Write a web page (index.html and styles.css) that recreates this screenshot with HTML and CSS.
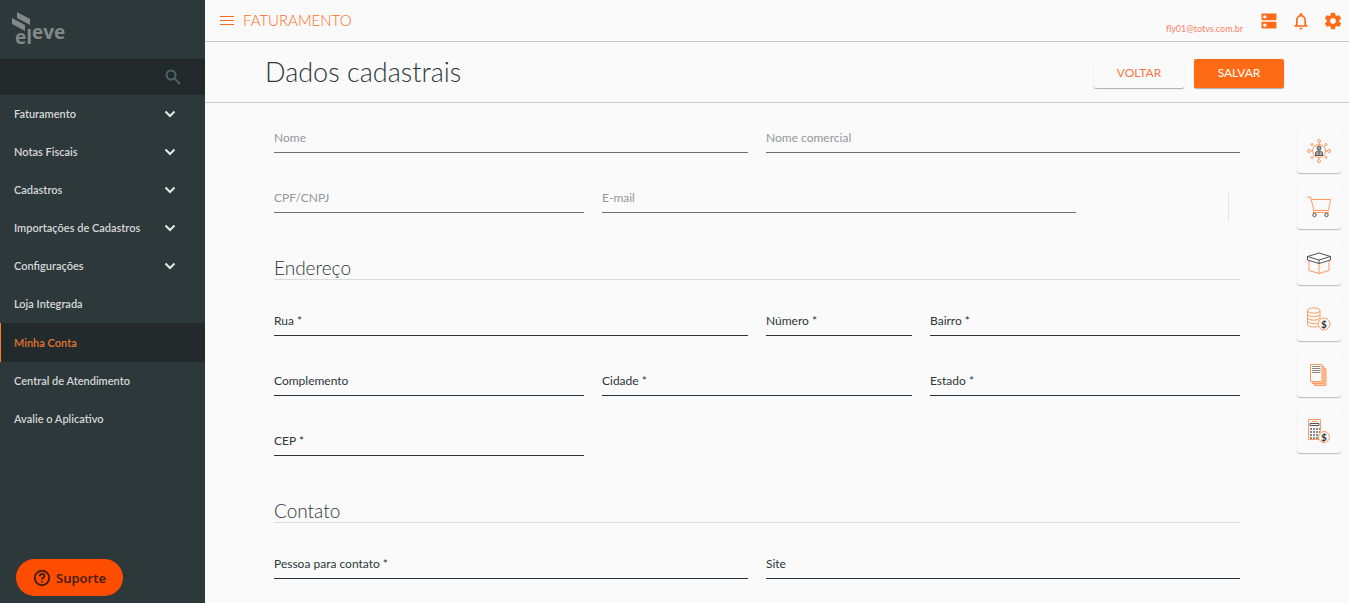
FILE: index.html
```html
<!DOCTYPE html>
<html lang="pt-BR">
<head>
    <meta charset="UTF-8">
    <meta name="viewport" content="width=device-width, initial-scale=1.0">
    <title>Dados cadastrais</title>
    <link rel="stylesheet" href="styles.css">
</head>
<body>
    <aside class="sidebar">
        <a href="#" class="logo" aria-label="eleve">
            <svg width="56" height="40" viewBox="0 0 56 40">
                <path d="M5 0 L18 7 V13 L5 6 Z M0 6 L13 13 V19 L0 12 Z"/>
                <text x="3" y="32" class="logo-text">el</text>
                <text x="20" y="27" class="logo-text">eve</text>
            </svg>
        </a>
        <form class="search">
            <input type="search" aria-label="Pesquisar">
            <button type="button" aria-label="Buscar">
                <svg width="16" height="16" viewBox="0 0 16 16"><circle cx="6" cy="6" r="4.5"/><path d="M9.3 9.3 L15 15"/></svg>
            </button>
        </form>
        <nav class="menu">
            <button type="button" class="menu-item">Faturamento <svg width="12" height="8" viewBox="0 0 12 8"><path d="M1.5 1.5 L6 6 L10.5 1.5"/></svg></button>
            <button type="button" class="menu-item">Notas Fiscais <svg width="12" height="8" viewBox="0 0 12 8"><path d="M1.5 1.5 L6 6 L10.5 1.5"/></svg></button>
            <button type="button" class="menu-item">Cadastros <svg width="12" height="8" viewBox="0 0 12 8"><path d="M1.5 1.5 L6 6 L10.5 1.5"/></svg></button>
            <button type="button" class="menu-item">Importações de Cadastros <svg width="12" height="8" viewBox="0 0 12 8"><path d="M1.5 1.5 L6 6 L10.5 1.5"/></svg></button>
            <button type="button" class="menu-item">Configurações <svg width="12" height="8" viewBox="0 0 12 8"><path d="M1.5 1.5 L6 6 L10.5 1.5"/></svg></button>
            <a href="#" class="menu-item">Loja Integrada</a>
            <a href="#" class="menu-item active">Minha Conta</a>
            <a href="#" class="menu-item">Central de Atendimento</a>
            <a href="#" class="menu-item">Avalie o Aplicativo</a>
        </nav>
    </aside>

    <main class="main">
        <header class="topbar">
            <button type="button" class="icon-btn" aria-label="Menu">
                <svg width="16" height="10" viewBox="0 0 16 10"><path d="M1 0h14v1H1z M1 4h14v1H1z M1 8h14v1H1z"/></svg>
            </button>
            <span class="module">FATURAMENTO</span>
            <a href="#" class="user">fly01@totvs.com.br</a>
            <div class="top-icons">
                <button type="button" class="icon-btn" aria-label="Aplicativos">
                    <svg width="20" height="20" viewBox="0 0 24 24"><path d="M20 13H4c-.55 0-1 .45-1 1v6c0 .55.45 1 1 1h16c.55 0 1-.45 1-1v-6c0-.55-.45-1-1-1zM7 19c-1.1 0-2-.9-2-2s.9-2 2-2 2 .9 2 2-.9 2-2 2zM20 3H4c-.55 0-1 .45-1 1v6c0 .55.45 1 1 1h16c.55 0 1-.45 1-1V4c0-.55-.45-1-1-1zM7 9c-1.1 0-2-.9-2-2s.9-2 2-2 2 .9 2 2-.9 2-2 2z"/></svg>
                </button>
                <button type="button" class="icon-btn" aria-label="Notificações">
                    <svg width="20" height="20" viewBox="0 0 24 24"><path d="M12 22c1.1 0 2-.9 2-2h-4c0 1.1.89 2 2 2zm6-6v-5c0-3.07-1.64-5.64-4.5-6.32V4c0-.83-.67-1.5-1.5-1.5s-1.5.67-1.5 1.5v.68C7.63 5.36 6 7.92 6 11v5l-2 2v1h16v-1l-2-2zm-2 1H8v-6c0-2.48 1.51-4.5 4-4.5s4 2.02 4 4.5v6z"/></svg>
                </button>
                <button type="button" class="icon-btn" aria-label="Configurações">
                    <svg width="20" height="20" viewBox="0 0 24 24"><path d="M19.43 12.98c.04-.32.07-.64.07-.98s-.03-.66-.07-.98l2.11-1.65c.19-.15.24-.42.12-.64l-2-3.46c-.12-.22-.39-.3-.61-.22l-2.49 1c-.52-.4-1.08-.73-1.69-.98l-.38-2.65C14.46 2.18 14.25 2 14 2h-4c-.25 0-.46.18-.49.42l-.38 2.65c-.61.25-1.17.59-1.69.98l-2.49-1c-.23-.09-.49 0-.61.22l-2 3.46c-.13.22-.07.49.12.64l2.11 1.65c-.04.32-.07.65-.07.98s.03.66.07.98l-2.11 1.65c-.19.15-.24.42-.12.64l2 3.46c.12.22.39.3.61.22l2.49-1c.52.4 1.08.73 1.69.98l.38 2.65c.03.24.24.42.49.42h4c.25 0 .46-.18.49-.42l.38-2.65c.61-.25 1.17-.59 1.69-.98l2.49 1c.23.09.49 0 .61-.22l2-3.46c.12-.22.07-.49-.12-.64l-2.11-1.65zM12 15.5c-1.93 0-3.5-1.57-3.5-3.5s1.57-3.5 3.5-3.5 3.5 1.57 3.5 3.5-1.57 3.5-3.5 3.5z"/></svg>
                </button>
            </div>
        </header>

        <div class="page-header">
            <h1>Dados cadastrais</h1>
            <button type="button" class="btn btn-voltar">VOLTAR</button>
            <button type="submit" form="cadastro" class="btn btn-salvar">SALVAR</button>
        </div>

        <div class="content">
            <form id="cadastro" class="form">
                <div class="row">
                    <div class="field col-6"><label for="nome">Nome</label><input type="text" id="nome" disabled></div>
                    <div class="field col-6"><label for="nomecomercial">Nome comercial</label><input type="text" id="nomecomercial" disabled></div>
                    <div class="field col-4"><label for="cpfcnpj">CPF/CNPJ</label><input type="text" id="cpfcnpj" disabled></div>
                    <div class="field col-6"><label for="email">E-mail</label><input type="email" id="email" disabled></div>
                    <div class="divider col-2"></div>
                </div>

                <h2>Endereço</h2>
                <div class="row">
                    <div class="field col-6"><label for="rua">Rua *</label><input type="text" id="rua"></div>
                    <div class="field col-2"><label for="numero">Número *</label><input type="text" id="numero"></div>
                    <div class="field col-4"><label for="bairro">Bairro *</label><input type="text" id="bairro"></div>
                    <div class="field col-4"><label for="complemento">Complemento</label><input type="text" id="complemento"></div>
                    <div class="field col-4"><label for="cidade">Cidade *</label><input type="text" id="cidade"></div>
                    <div class="field col-4"><label for="estado">Estado *</label><input type="text" id="estado"></div>
                    <div class="field col-4"><label for="cep">CEP *</label><input type="text" id="cep"></div>
                </div>

                <h2>Contato</h2>
                <div class="row">
                    <div class="field col-6"><label for="contato">Pessoa para contato *</label><input type="text" id="contato"></div>
                    <div class="field col-6"><label for="site">Site</label><input type="text" id="site"></div>
                </div>
            </form>

            <div class="shortcuts">
                <button type="button" aria-label="Clientes">
                    <svg width="24" height="24" viewBox="0 0 24 24">
                        <g class="o"><circle cx="12" cy="12" r="6.5"/><circle cx="12" cy="2" r="1.5"/><circle cx="12" cy="22" r="1.5"/><circle cx="2" cy="12" r="1.5"/><circle cx="22" cy="12" r="1.5"/><circle cx="5" cy="5.5" r="1"/><circle cx="19" cy="5.5" r="1"/><circle cx="5" cy="18.5" r="1"/><circle cx="19" cy="18.5" r="1"/><path d="M12 3.5v2M12 18.5v2M3.5 12h2M18.5 12h2M6 6.5l1.5 1.5M18 6.5l-1.5 1.5M6 17.5l1.5-1.5M18 17.5l-1.5-1.5"/></g>
                        <g class="d body"><circle cx="12" cy="9" r="2"/><path d="M8.5 16.5v-3l2-1.5h3l2 1.5v3z M12 12.5v3"/></g>
                    </svg>
                </button>
                <button type="button" aria-label="Vendas">
                    <svg width="24" height="24" viewBox="0 0 24 24">
                        <path class="o" d="M0 2h3.5L7 15.5h14.5M4.5 4.5h19l-2 11M7 15.5l-1 2h16"/>
                        <g class="d"><circle cx="7.5" cy="20" r="1.7"/><circle cx="19.5" cy="20" r="1.7"/></g>
                    </svg>
                </button>
                <button type="button" aria-label="Produtos">
                    <svg width="24" height="24" viewBox="0 0 24 24">
                        <path class="o" d="M2 9.5v10l10 3 10-3v-10M12 12v10.5"/>
                        <path class="d" d="M.5 5.5L12 2l11.5 3.5V9L12 12.5.5 9zM.5 5.5L12 9l11.5-3.5M12 9v3.5"/>
                    </svg>
                </button>
                <button type="button" aria-label="Financeiro">
                    <svg width="24" height="24" viewBox="0 0 24 24">
                        <path class="o" d="M.5 3.5C.5 0 13 0 13 3.5S.5 7 .5 3.5V17c0 3 6 3.5 10 2.5M13 3.5v8M.5 7c0 3.5 12.5 3.5 12.5 0M.5 10.5c0 3.5 12.5 3.5 12.5 0M.5 13.8c0 3 7 3.2 10 2.2"/>
                        <circle class="o sheet" cx="17" cy="17" r="6"/><text x="17" y="21">$</text>
                    </svg>
                </button>
                <button type="button" aria-label="Notas">
                    <svg width="24" height="24" viewBox="0 0 24 24">
                        <path class="o pale" d="M7.5 5.5H19v17H7.5z"/><path class="o pale" d="M5.5 3.5H17v17H5.5z"/><path class="o sheet" d="M3.5 1.5H15v17H3.5z"/>
                        <path class="d lines" d="M5 3.5h8.5M5 5.5h8.5M5 7.5h8.5M5 9.5h8.5"/>
                    </svg>
                </button>
                <button type="button" aria-label="Calculadora">
                    <svg width="24" height="24" viewBox="0 0 24 24">
                        <path class="o" d="M13 20.5H1.5V.5h12v12M5 2.5h5"/>
                        <path class="d" d="M3 4.5h9v2H3z"/><path class="keys" d="M3 10h10M3 13h10M3 16h9M3 19h9"/>
                        <circle class="o sheet" cx="17" cy="18" r="5.5"/><text x="17" y="22">$</text>
                    </svg>
                </button>
            </div>
        </div>
    </main>

    <button type="button" class="suporte">
        <svg width="18" height="18" viewBox="0 0 18 18"><circle cx="9" cy="9" r="7.2"/><path d="M6.8 7.2c0-2.8 4.5-2.8 4.5 0 0 1.6-2.3 1.6-2.3 3.3M9 12v1.6"/></svg>
        Suporte
    </button>
</body>
</html>
```
FILE: styles.css
```css
* {
    box-sizing: border-box;
}
body {
    font-family: Lato, sans-serif;
    font-size: 12px;
    color: #2c3739;
    background-color: #fafafa;
    margin: 0;
    display: flex;
    min-height: 100vh;
}
button, input {
    font-family: inherit;
    font-size: inherit;
    border: none;
    background: none;
    padding: 0;
}
button {
    cursor: pointer;
}
a {
    text-decoration: none;
}
svg {
    display: block;
}

/* Menu lateral */
.sidebar {
    width: 205px;
    flex-shrink: 0;
    background-color: #2d383a;
}
.logo {
    display: block;
    height: 59px;
    padding: 12px;
}
.logo svg {
    fill: #838889;
    overflow: visible;
}
.logo-text {
    font-family: "Open Sans", sans-serif;
    font-weight: bold;
    font-size: 19px;
}
.search {
    display: flex;
    align-items: center;
    height: 36px;
    padding: 0 24px 0 14px;
    background-color: #22292b;
}
.search input {
    flex: 1;
    min-width: 0;
    color: #d5d7d8;
    outline: none;
}
.search svg {
    fill: none;
    stroke: #4d6567;
    stroke-width: 2;
}
.menu-item {
    display: flex;
    align-items: center;
    justify-content: space-between;
    width: 100%;
    height: 38px;
    padding: 0 29px 1px 14px;
    font-size: 11px;
    font-weight: 600;
    color: #d5d7d8;
}
.menu-item svg {
    fill: none;
    stroke: #e6e8e8;
    stroke-width: 2;
}
.menu-item.active {
    height: 39px;
    padding-left: 13px;
    border-left: 1px solid #ff7a30;
    background-color: #232a2c;
    color: #e2742f;
}

/* Barra superior */
.main {
    flex: 1;
    min-width: 0;
}
.topbar {
    display: flex;
    align-items: center;
    height: 42px;
    padding: 0 6px 0 14px;
    border-bottom: 1px solid #c6c6c6;
    color: #ff6b16;
}
.icon-btn svg {
    fill: #ff6b16;
}
.module {
    margin-left: 8px;
    padding-bottom: 2px;
    font-size: 15px;
    font-weight: 300;
}
.user {
    margin-left: auto;
    padding-top: 16px;
    font-size: 9px;
    color: #ff7f66;
}
.top-icons {
    display: flex;
    gap: 12px;
    margin-left: 16px;
}

.page-header {
    display: flex;
    align-items: center;
    gap: 10px;
    height: 61px;
    padding: 2px 65px 0 60px;
    border-bottom: 1px solid #c9c9c9;
}
h1 {
    margin: 0 auto 0 0;
    padding-bottom: 4px;
    font-size: 27px;
    font-weight: 300;
}
.btn {
    width: 90px;
    height: 29px;
    padding-bottom: 2px;
    border-radius: 2px;
    box-shadow: 0 1px 1px rgba(0, 0, 0, 0.3);
}
.btn-voltar {
    color: #ff7346;
}
.btn-salvar {
    background-color: #ff6b14;
    color: white;
}

/* Formulario */
.content {
    display: flex;
    justify-content: space-between;
    padding: 22px 8px 0 69px;
}
.form {
    flex: 1;
    margin-right: 57px;
}
.row {
    display: grid;
    grid-template-columns: repeat(12, 1fr);
    gap: 32px 18px;
}
.col-2 { grid-column: span 2; }
.col-4 { grid-column: span 4; }
.col-6 { grid-column: span 6; }
.field {
    display: grid;
}
.field label, .field input {
    grid-area: 1 / 1;
    min-width: 0;
}
.field label {
    padding-top: 5px;
    line-height: 16px;
}
.field input {
    height: 28px;
    border-bottom: 1px solid #2c3235;
    border-radius: 0;
    outline: none;
}
.field:has(input:disabled) label {
    color: #92979a;
}
.field input:disabled {
    border-bottom-color: #6c7072;
}
.divider {
    height: 28px;
    margin: 8px 11px -8px 0;
    border-right: 1px solid #e3e3e3;
}
h2 {
    margin: 40px 0 28px;
    height: 27px;
    border-bottom: 1px solid #dadada;
    font-size: 19px;
    font-weight: 300;
    line-height: 30px;
}

.shortcuts {
    display: flex;
    flex-direction: column;
    gap: 12px;
    padding-top: 4px;
}
.shortcuts button {
    display: flex;
    align-items: center;
    justify-content: center;
    width: 44px;
    height: 44px;
    border-radius: 3px;
    box-shadow: 0 1px 1px rgba(0, 0, 0, 0.25);
}
.shortcuts svg {
    fill: none;
}
.o { stroke: #ff9a60; }
.d { stroke: #555; }
.body { fill: #aaa; }
.pale { fill: #fdcdb0; }
.sheet { fill: #fafafa; }
.lines { stroke: #888; }
.keys {
    stroke: #888;
    stroke-width: 2;
    stroke-dasharray: 2 1;
}
.shortcuts text {
    font-size: 10px;
    font-weight: bold;
    text-anchor: middle;
    fill: #333;
}

.suporte {
    position: fixed;
    left: 16px;
    bottom: 7px;
    display: flex;
    align-items: center;
    gap: 5px;
    height: 37px;
    padding: 0 17px;
    border-radius: 19px;
    background-color: #ff4d00;
    color: #4a1e0c;
    font-family: "Noto Sans", sans-serif;
    font-size: 13px;
    font-weight: 600;
}
.suporte svg {
    fill: none;
    stroke: #4a1e0c;
    stroke-width: 2;
}
```
